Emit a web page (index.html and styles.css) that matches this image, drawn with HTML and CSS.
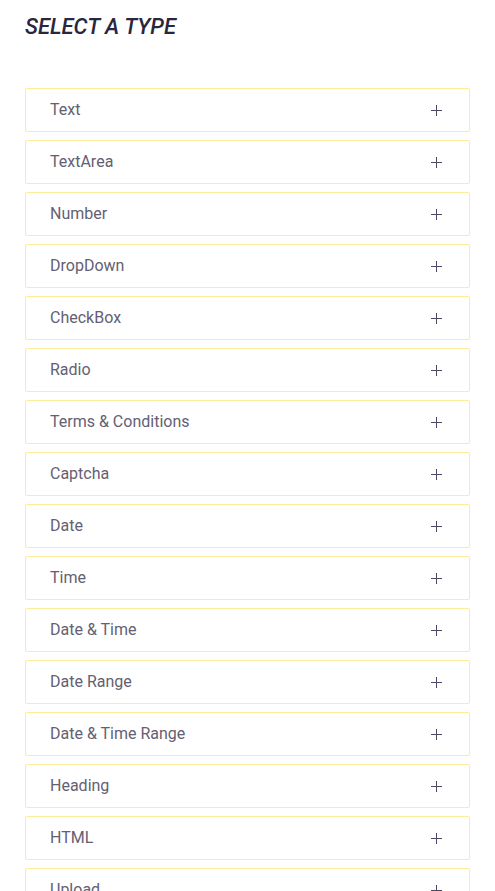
FILE: index.html
```html
<!DOCTYPE html>
<html lang="en">
<head>
    <meta charset="UTF-8">
    <meta name="viewport" content="width=device-width, initial-scale=1.0">
    <title>Select a type</title>
    <link rel="stylesheet" href="styles.css">
</head>
<body>
    <h1 class="title">SELECT A TYPE</h1>
    <div class="type-list">
        <button type="button" class="type-item">Text <span class="plus"></span></button>
        <button type="button" class="type-item">TextArea <span class="plus"></span></button>
        <button type="button" class="type-item">Number <span class="plus"></span></button>
        <button type="button" class="type-item">DropDown <span class="plus"></span></button>
        <button type="button" class="type-item">CheckBox <span class="plus"></span></button>
        <button type="button" class="type-item">Radio <span class="plus"></span></button>
        <button type="button" class="type-item">Terms &amp; Conditions <span class="plus"></span></button>
        <button type="button" class="type-item">Captcha <span class="plus"></span></button>
        <button type="button" class="type-item">Date <span class="plus"></span></button>
        <button type="button" class="type-item">Time <span class="plus"></span></button>
        <button type="button" class="type-item">Date &amp; Time <span class="plus"></span></button>
        <button type="button" class="type-item">Date Range <span class="plus"></span></button>
        <button type="button" class="type-item">Date &amp; Time Range <span class="plus"></span></button>
        <button type="button" class="type-item">Heading <span class="plus"></span></button>
        <button type="button" class="type-item">HTML <span class="plus"></span></button>
        <button type="button" class="type-item">Upload <span class="plus"></span></button>
    </div>
</body>
</html>
```

FILE: styles.css
```css
body {
    margin: 0;
    padding: 12px 25px;
    background-color: #fff;
    font-family: Roboto, "Liberation Sans", sans-serif;
}
.title {
    margin: 0 0 46px;
    font-size: 22px;
    line-height: 30px;
    font-weight: 500;
    font-style: italic;
    color: #29263d;
}
.type-list {
    display: flex;
    flex-direction: column;
    gap: 8px;
}
.type-item {
    display: flex;
    align-items: center;
    justify-content: space-between;
    height: 44px;
    padding: 0 27px 0 24px;
    border: 1px solid #ffeb99;
    border-radius: 2px;
    background-color: #fff;
    color: #646073;
    font-family: inherit;
    font-size: 16px;
    line-height: 20px;
    text-align: left;
    cursor: pointer;
}
.plus {
    width: 11px;
    height: 11px;
    background: linear-gradient(#4d4965, #4d4965) center / 11px 1px no-repeat,
        linear-gradient(#4d4965, #4d4965) center / 1px 11px no-repeat;
}
```
